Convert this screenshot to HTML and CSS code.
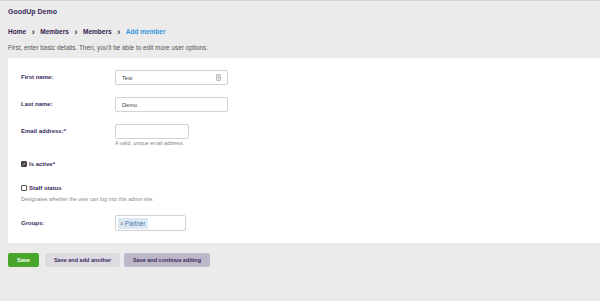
FILE: index.html
```html
<!DOCTYPE html>
<html>
<head>
<meta charset="utf-8">
<link rel="stylesheet" href="styles.css">
</head>
<body>
<header class="brand">GoodUp Demo</header>
<nav class="breadcrumbs">
  <span class="crumb">Home</span><span class="sep">&#x203A;</span>
  <span class="crumb">Members</span><span class="sep">&#x203A;</span>
  <span class="crumb">Members</span><span class="sep">&#x203A;</span>
  <span class="crumb current">Add member</span>
</nav>
<p class="intro">First, enter basic details. Then, you'll be able to edit more user options.</p>
<form class="card">
  <div class="row r1">
    <label class="label">First name:</label>
    <div class="input wide"><span class="val">Test</span>
      <svg class="keyicon" width="5" height="7" viewBox="0 0 5 7"><rect x="0.5" y="0.5" width="4" height="6" rx="0.6" fill="#eee" stroke="#999" stroke-width="0.6"/><rect x="1.5" y="1.8" width="2" height="0.6" fill="#999"/><rect x="1.5" y="3.2" width="2" height="0.6" fill="#999"/><rect x="1.5" y="4.6" width="2" height="0.6" fill="#999"/></svg>
    </div>
  </div>
  <div class="row r2">
    <label class="label">Last name:</label>
    <div class="input wide"><span class="val">Demo</span></div>
  </div>
  <div class="row r3">
    <label class="label">Email address:*</label>
    <div class="field">
      <div class="input narrow"></div>
      <div class="help">A valid, unique email address.</div>
    </div>
  </div>
  <div class="check r4"><span class="box checked"><svg width="6" height="6" viewBox="0 0 6 6"><path d="M1.2 3.1 L2.5 4.3 L4.8 1.6" fill="none" stroke="#fff" stroke-width="1"/></svg></span><span class="label">Is active*</span></div>
  <div class="check r5"><span class="box"></span><span class="label">Staff status</span></div>
  <div class="help r5h">Designates whether the user can log into this admin site.</div>
  <div class="row r6">
    <label class="label">Groups:</label>
    <div class="input groups"><span class="tag"><span class="x">&times;</span>Partner</span></div>
  </div>
</form>
<div class="actions">
  <button class="btn save">Save</button>
  <button class="btn another">Save and add another</button>
  <button class="btn cont">Save and continue editing</button>
</div>
</body>
</html>
```
FILE: styles.css
```css
* { box-sizing: border-box; }
html, body { margin: 0; padding: 0; }
body {
  background: #ebebeb;
  font-family: "Liberation Sans", Arial, sans-serif;
  border-top: 1px solid #d4d4d4;
  width: 600px;
  height: 301px;
  overflow: hidden;
}
.brand {
  padding: 6px 8px 0;
  font-size: 7px;
  line-height: 10px;
  font-weight: bold;
  color: #3a2a5e;
}
.breadcrumbs {
  margin-top: 10px;
  padding: 0 8px;
  font-size: 6.5px;
  line-height: 10px;
  font-weight: bold;
  color: #33234f;
  display: flex;
  align-items: center;
}
.sep { margin: 0 5.6px; font-size: 9px; font-weight: bold; }
.current { color: #3196dc; }
.intro {
  margin: 6px 0 0;
  padding: 0 8px;
  font-size: 6.4px;
  line-height: 10px;
  color: #555;
}
.card {
  margin: 5px 0 0 8px;
  background: #fff;
  padding: 12px 0 12px 13px;
}
.row { display: flex; align-items: flex-start; }
.row > .label {
  width: 94px;
  flex: none;
  line-height: 15px;
}
.label {
  font-size: 6px;
  font-weight: bold;
  color: #3a2a5e;
}
.input {
  height: 15px;
  border: 1px solid #d2d2d2;
  border-radius: 2px;
  background: #fff;
  display: flex;
  align-items: center;
  padding: 0 6px;
  font-size: 5.7px;
  color: #444;
}
.wide { width: 113px; justify-content: space-between; }
.narrow { width: 74px; }
.keyicon { display: block; }
.r2 { margin-top: 12px; }
.r3 { margin-top: 12px; }
.help {
  font-size: 5.2px;
  line-height: 8px;
  color: #888;
}
.check { display: flex; align-items: center; height: 10px; }
.check .label { line-height: 10px; }
.r4 { margin-top: 12px; }
.r5 { margin-top: 14px; }
.r5h { margin-top: 2px; font-size: 5.3px; }
.box {
  width: 6px; height: 6px;
  border: 0.8px solid #555;
  border-radius: 1px;
  margin-right: 2px;
  display: flex; align-items: center; justify-content: center;
  background: #fff;
}
.box.checked { background: #444; border-color: #444; }
.box svg { display: block; }
.r6 { margin-top: 12px; }
.r6 > .label { line-height: 16px; }
.groups { width: 71px; height: 16px; padding: 0 2px; }
.tag {
  background: #dbe9f5;
  color: #4a78a6;
  font-size: 6.3px;
  padding: 0 3px 0 2px;
  height: 11px;
  line-height: 11px;
  border-radius: 1px;
  display: flex;
  align-items: center;
}
.tag .x { margin-right: 1px; color: #777; }
.actions {
  display: flex;
  margin: 10px 0 0 8px;
}
.btn {
  height: 14px;
  border: none;
  border-radius: 2px;
  font-family: "Liberation Sans", Arial, sans-serif;
  font-size: 5.5px;
  font-weight: bold;
  padding: 0;
  cursor: pointer;
}
.save { width: 31px; background: #4aa62a; color: #fff; }
.another { width: 75px; margin-left: 6px; background: #dddbe2; color: #3a2a5e; }
.cont { width: 86px; margin-left: 4px; background: #bdb7ca; color: #3a2a5e; }
```
